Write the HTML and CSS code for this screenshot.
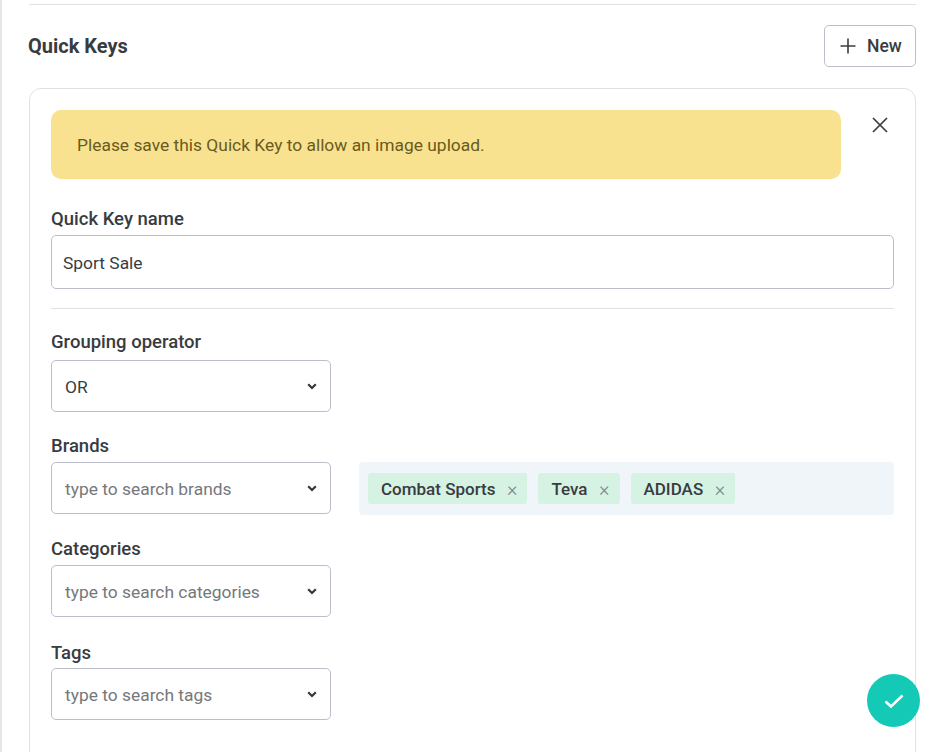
FILE: index.html
```html
<!DOCTYPE html>
<html lang="en">
  <head>
    <meta charset="UTF-8" />
    <meta name="viewport" content="width=device-width, initial-scale=1.0" />
    <title>Quick Keys</title>
    <link rel="stylesheet" href="styles.css">
  </head>
  <body>
    <div class="page">
      <div class="top-rule"></div>

      <div class="section-head">
        <h2>Quick Keys</h2>
        <button class="btn-new">
          <svg width="18" height="18" viewBox="0 0 18 18"><path d="M9 1.5v15M1.5 9h15" stroke="#3a3d40" stroke-width="1.6" fill="none"/></svg>
          New
        </button>
      </div>

      <div class="card">
        <div class="alert-row">
          <div class="alert">Please save this Quick Key to allow an image upload.</div>
          <button class="close">
            <svg width="18" height="18" viewBox="0 0 18 18"><path d="M2 2l14 14M16 2L2 16" stroke="#3a3d40" stroke-width="1.7" fill="none"/></svg>
          </button>
        </div>

        <label class="label label-first">Quick Key name</label>
        <div class="input">Sport Sale</div>
        <hr class="rule">

        <label class="label label-group">Grouping operator</label>
        <div class="select value">OR
          <svg class="chev" width="10" height="7" viewBox="0 0 10 7"><path d="M1.2 1.3L5 5l3.8-3.7" stroke="#33363a" stroke-width="2.2" fill="none"/></svg>
        </div>

        <label class="label">Brands</label>
        <div class="brand-row">
          <div class="select">type to search brands
            <svg class="chev" width="10" height="7" viewBox="0 0 10 7"><path d="M1.2 1.3L5 5l3.8-3.7" stroke="#33363a" stroke-width="2.2" fill="none"/></svg>
          </div>
          <div class="tags">
            <span class="tag">Combat Sports <i>×</i></span>
            <span class="tag">Teva <i>×</i></span>
            <span class="tag">ADIDAS <i>×</i></span>
          </div>
        </div>

        <label class="label">Categories</label>
        <div class="select">type to search categories
          <svg class="chev" width="10" height="7" viewBox="0 0 10 7"><path d="M1.2 1.3L5 5l3.8-3.7" stroke="#33363a" stroke-width="2.2" fill="none"/></svg>
        </div>

        <label class="label label-tags">Tags</label>
        <div class="select">type to search tags
          <svg class="chev" width="10" height="7" viewBox="0 0 10 7"><path d="M1.2 1.3L5 5l3.8-3.7" stroke="#33363a" stroke-width="2.2" fill="none"/></svg>
        </div>
      </div>
    </div>

    <button class="fab">
      <svg width="20" height="16" viewBox="0 0 20 16"><path d="M1.5 8.5l5.5 5L18.5 2.5" stroke="#fff" stroke-width="2.5" fill="none"/></svg>
    </button>
  </body>
</html>
```

FILE: styles.css
```css
html, body {
  margin: 0;
  padding: 0;
  height: 752px;
  overflow: hidden;
  background: #fff;
}
body {
  font-family: Roboto, "Liberation Sans", sans-serif;
  color: #393c3f;
}
.page {
  box-sizing: border-box;
  width: 932px;
  height: 752px;
  padding: 4px 16px 0 27px;
  border-left: 2px solid #e4e5e8;
  overflow: hidden;
}
.top-rule {
  height: 1px;
  background: #e0e1e4;
}
.section-head {
  display: flex;
  align-items: center;
  justify-content: space-between;
  height: 42px;
  margin-top: 20px;
}
.section-head h2 {
  margin: 0 0 0 -1px;
  font-size: 20px;
  font-weight: 700;
}
.btn-new {
  display: flex;
  align-items: center;
  gap: 10px;
  width: 92px;
  height: 42px;
  padding: 0 0 0 14px;
  background: #fff;
  border: 1px solid #bcbecb;
  border-radius: 5px;
  font: 500 17.5px Roboto, sans-serif;
  color: #393c3f;
}
.card {
  box-sizing: border-box;
  margin-top: 21px;
  height: 700px;
  padding: 21px 21px 0 21px;
  border: 1px solid #e0e1e6;
  border-radius: 12px;
}
.alert-row {
  display: flex;
  justify-content: space-between;
  margin-bottom: 28px;
}
.alert {
  display: flex;
  align-items: center;
  box-sizing: border-box;
  width: 790px;
  height: 69px;
  padding-left: 26px;
  background: #f8e28f;
  border-radius: 10px;
  color: #6a5a1e;
  font-size: 17.4px;
}
.close {
  width: 18px;
  height: 18px;
  margin: 6px 5px 0 0;
  padding: 0;
  background: none;
  border: 0;
}
.label {
  display: block;
  height: 24px;
  margin-top: 22px;
  margin-bottom: 4px;
  font-size: 18.5px;
  font-weight: 500;
  line-height: 24px;
}
.label-first {
  margin-top: 0;
}
.label-group {
  margin-top: 21px;
  margin-bottom: 6px;
}
.label-tags {
  margin-top: 24px;
  margin-bottom: 3px;
}
.input {
  box-sizing: border-box;
  height: 54px;
  padding-left: 11px;
  line-height: 54px;
  border: 1px solid #bcbecb;
  border-radius: 5px;
  font-size: 17.4px;
}
.rule {
  height: 1px;
  margin: 19px 0 21px;
  background: #e0e1e4;
  border: 0;
}
.select {
  position: relative;
  box-sizing: border-box;
  width: 280px;
  height: 52px;
  padding-left: 13px;
  line-height: 52px;
  border: 1px solid #bcbecb;
  border-radius: 5px;
  font-size: 17.4px;
  color: #75787c;
}
.select.value {
  color: #393c3f;
}
.chev {
  position: absolute;
  right: 13px;
  top: 22px;
}
.brand-row {
  display: flex;
  gap: 28px;
}
.tags {
  flex: 1;
  display: flex;
  align-items: center;
  gap: 11px;
  height: 53px;
  padding-left: 9px;
  background: #f0f5f9;
  border-radius: 4px;
}
.tag {
  display: flex;
  align-items: center;
  gap: 11.5px;
  height: 31px;
  padding: 0 10px 0 13px;
  background: #d5f2e3;
  border-radius: 3px;
  font-size: 17px;
  font-weight: 500;
}
.tag i {
  font-style: normal;
  font-weight: 300;
  font-size: 20px;
  color: #7c8387;
}
.fab {
  position: fixed;
  left: 867px;
  top: 674px;
  display: flex;
  align-items: center;
  justify-content: center;
  width: 53px;
  height: 53px;
  padding: 0;
  background: #14c9b6;
  border: 0;
  border-radius: 50%;
}
```
